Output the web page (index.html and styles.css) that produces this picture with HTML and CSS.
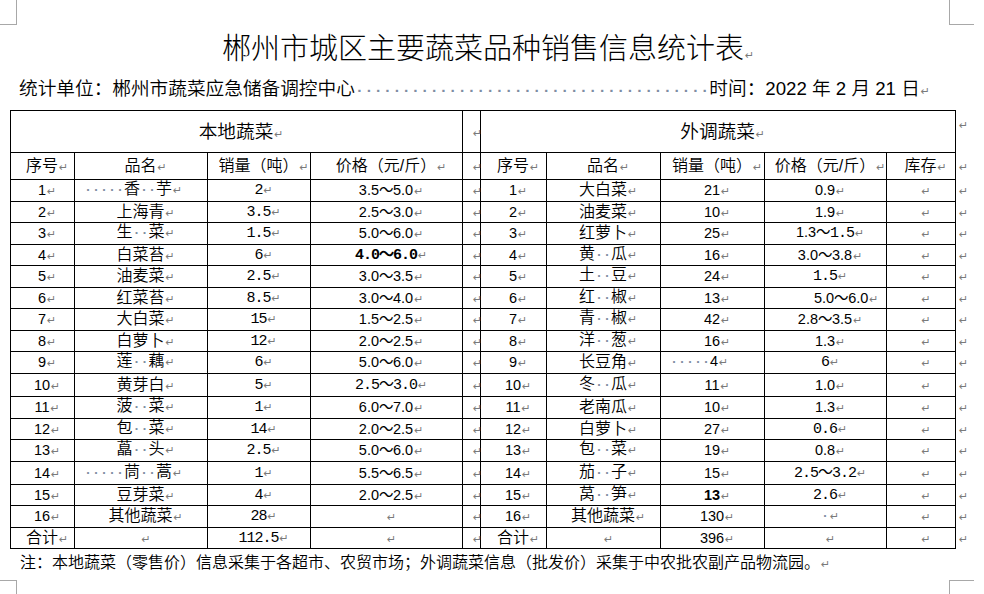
FILE: index.html
```html
<!DOCTYPE html>
<html lang="zh-CN">
<head>
<meta charset="utf-8">
<title>郴州市城区主要蔬菜品种销售信息统计表</title>
<link rel="stylesheet" href="styles.css">
</head>
<body>
<div class="page">
  <span class="crop crop-tl"></span>
  <span class="crop crop-tr"></span>
  <span class="crop crop-bl"></span>
  <span class="crop crop-br"></span>

  <h1 class="title">郴州市城区主要蔬菜品种销售信息统计表<span class="pm">↵</span></h1>
  <p class="meta">统计单位：郴州市蔬菜应急储备调控中心<span class="dots">······································</span>时间：2022 年 2 月 21 日<span class="pm">↵</span></p>

  <table class="sheet">
    <colgroup>
      <col class="w64"><col class="w133"><col class="w103"><col class="w152">
      <col class="w18">
      <col class="w66"><col class="w114"><col class="w104"><col class="w122"><col class="w69">
      <col class="w25">
    </colgroup>
    <tbody>
      <tr class="rh1">
        <td colspan="4" class="hd">本地蔬菜<span class="pm">↵</span></td>
        <td class="mid"><span class="pm">↵</span></td>
        <td colspan="5" class="hd">外调蔬菜<span class="pm">↵</span></td>
        <td class="eor top"><span class="pm">↵</span></td>
      </tr>
      <tr class="rh2">
        <td>序号<span class="pm">↵</span></td>
        <td>品名<span class="pm">↵</span></td>
        <td>销量（吨）<span class="pm">↵</span></td>
        <td>价格（元/斤）<span class="pm">↵</span></td>
        <td class="mid"><span class="pm">↵</span></td>
        <td>序号<span class="pm">↵</span></td>
        <td>品名<span class="pm">↵</span></td>
        <td>销量（吨）<span class="pm">↵</span></td>
        <td>价格（元/斤）<span class="pm">↵</span></td>
        <td>库存<span class="pm">↵</span></td>
        <td class="eor"><span class="pm">↵</span></td>
      </tr>
      <tr>
        <td><span class="c">1</span><span class="pm">↵</span></td>
        <td class="lft"><span class="sp">·····</span>香<span class="sp">··</span>芋<span class="pm">↵</span></td>
        <td><span class="m">2</span><span class="pm">↵</span></td>
        <td><span class="c">3.5～5.0</span><span class="pm">↵</span></td>
        <td class="mid"><span class="pm">↵</span></td>
        <td><span class="c">1</span><span class="pm">↵</span></td>
        <td>大白菜<span class="pm">↵</span></td>
        <td><span class="c">21</span><span class="pm">↵</span></td>
        <td><span class="c">0.9</span><span class="pm">↵</span></td>
        <td><span class="pm">↵</span></td>
        <td class="eor"><span class="pm">↵</span></td>
      </tr>
      <tr>
        <td><span class="c">2</span><span class="pm">↵</span></td>
        <td>上海青<span class="pm">↵</span></td>
        <td><span class="m">3.5</span><span class="pm">↵</span></td>
        <td><span class="c">2.5～3.0</span><span class="pm">↵</span></td>
        <td class="mid"><span class="pm">↵</span></td>
        <td><span class="c">2</span><span class="pm">↵</span></td>
        <td>油麦菜<span class="pm">↵</span></td>
        <td><span class="c">10</span><span class="pm">↵</span></td>
        <td><span class="c">1.9</span><span class="pm">↵</span></td>
        <td><span class="pm">↵</span></td>
        <td class="eor"><span class="pm">↵</span></td>
      </tr>
      <tr>
        <td><span class="c">3</span><span class="pm">↵</span></td>
        <td>生<span class="sp">··</span>菜<span class="pm">↵</span></td>
        <td><span class="m">1.5</span><span class="pm">↵</span></td>
        <td><span class="c">5.0～6.0</span><span class="pm">↵</span></td>
        <td class="mid"><span class="pm">↵</span></td>
        <td><span class="c">3</span><span class="pm">↵</span></td>
        <td>红萝卜<span class="pm">↵</span></td>
        <td><span class="c">25</span><span class="pm">↵</span></td>
        <td><span class="c">1.3～</span><span class="m">1.5</span><span class="pm">↵</span></td>
        <td><span class="pm">↵</span></td>
        <td class="eor"><span class="pm">↵</span></td>
      </tr>
      <tr>
        <td><span class="c">4</span><span class="pm">↵</span></td>
        <td>白菜苔<span class="pm">↵</span></td>
        <td><span class="m">6</span><span class="pm">↵</span></td>
        <td><span class="m b">4.0～6.0</span><span class="pm">↵</span></td>
        <td class="mid"><span class="pm">↵</span></td>
        <td><span class="c">4</span><span class="pm">↵</span></td>
        <td>黄<span class="sp">··</span>瓜<span class="pm">↵</span></td>
        <td><span class="c">16</span><span class="pm">↵</span></td>
        <td><span class="c">3.0～3.8</span><span class="pm">↵</span></td>
        <td><span class="pm">↵</span></td>
        <td class="eor"><span class="pm">↵</span></td>
      </tr>
      <tr>
        <td><span class="c">5</span><span class="pm">↵</span></td>
        <td>油麦菜<span class="pm">↵</span></td>
        <td><span class="m">2.5</span><span class="pm">↵</span></td>
        <td><span class="c">3.0～3.5</span><span class="pm">↵</span></td>
        <td class="mid"><span class="pm">↵</span></td>
        <td><span class="c">5</span><span class="pm">↵</span></td>
        <td>土<span class="sp">··</span>豆<span class="pm">↵</span></td>
        <td><span class="c">24</span><span class="pm">↵</span></td>
        <td><span class="m">1.5</span><span class="pm">↵</span></td>
        <td><span class="pm">↵</span></td>
        <td class="eor"><span class="pm">↵</span></td>
      </tr>
      <tr>
        <td><span class="c">6</span><span class="pm">↵</span></td>
        <td>红菜苔<span class="pm">↵</span></td>
        <td><span class="m">8.5</span><span class="pm">↵</span></td>
        <td><span class="c">3.0～4.0</span><span class="pm">↵</span></td>
        <td class="mid"><span class="pm">↵</span></td>
        <td><span class="c">6</span><span class="pm">↵</span></td>
        <td>红<span class="sp">··</span>椒<span class="pm">↵</span></td>
        <td><span class="c">13</span><span class="pm">↵</span></td>
        <td class="shift"><span class="c">5.0～6.0</span><span class="pm">↵</span></td>
        <td><span class="pm">↵</span></td>
        <td class="eor"><span class="pm">↵</span></td>
      </tr>
      <tr>
        <td><span class="c">7</span><span class="pm">↵</span></td>
        <td>大白菜<span class="pm">↵</span></td>
        <td><span class="m">15</span><span class="pm">↵</span></td>
        <td><span class="c">1.5～2.5</span><span class="pm">↵</span></td>
        <td class="mid"><span class="pm">↵</span></td>
        <td><span class="c">7</span><span class="pm">↵</span></td>
        <td>青<span class="sp">··</span>椒<span class="pm">↵</span></td>
        <td><span class="c">42</span><span class="pm">↵</span></td>
        <td><span class="c">2.8～3.5</span><span class="pm">↵</span></td>
        <td><span class="pm">↵</span></td>
        <td class="eor"><span class="pm">↵</span></td>
      </tr>
      <tr>
        <td><span class="c">8</span><span class="pm">↵</span></td>
        <td>白萝卜<span class="pm">↵</span></td>
        <td><span class="m">12</span><span class="pm">↵</span></td>
        <td><span class="c">2.0～2.5</span><span class="pm">↵</span></td>
        <td class="mid"><span class="pm">↵</span></td>
        <td><span class="c">8</span><span class="pm">↵</span></td>
        <td>洋<span class="sp">··</span>葱<span class="pm">↵</span></td>
        <td><span class="c">16</span><span class="pm">↵</span></td>
        <td><span class="c">1.3</span><span class="pm">↵</span></td>
        <td><span class="pm">↵</span></td>
        <td class="eor"><span class="pm">↵</span></td>
      </tr>
      <tr>
        <td><span class="c">9</span><span class="pm">↵</span></td>
        <td>莲<span class="sp">··</span>藕<span class="pm">↵</span></td>
        <td><span class="m">6</span><span class="pm">↵</span></td>
        <td><span class="c">5.0～6.0</span><span class="pm">↵</span></td>
        <td class="mid"><span class="pm">↵</span></td>
        <td><span class="c">9</span><span class="pm">↵</span></td>
        <td>长豆角<span class="pm">↵</span></td>
        <td class="lft"><span class="sp">·····</span><span class="c">4</span><span class="pm">↵</span></td>
        <td><span class="m">6</span><span class="pm">↵</span></td>
        <td><span class="pm">↵</span></td>
        <td class="eor"><span class="pm">↵</span></td>
      </tr>
      <tr class="rtall">
        <td><span class="c">10</span><span class="pm">↵</span></td>
        <td>黄芽白<span class="pm">↵</span></td>
        <td><span class="m">5</span><span class="pm">↵</span></td>
        <td><span class="m">2.5～3.0</span><span class="pm">↵</span></td>
        <td class="mid"><span class="pm">↵</span></td>
        <td><span class="c">10</span><span class="pm">↵</span></td>
        <td>冬<span class="sp">··</span>瓜<span class="pm">↵</span></td>
        <td><span class="c">11</span><span class="pm">↵</span></td>
        <td><span class="c">1.0</span><span class="pm">↵</span></td>
        <td><span class="pm">↵</span></td>
        <td class="eor"><span class="pm">↵</span></td>
      </tr>
      <tr>
        <td><span class="c">11</span><span class="pm">↵</span></td>
        <td>菠<span class="sp">··</span>菜<span class="pm">↵</span></td>
        <td><span class="m">1</span><span class="pm">↵</span></td>
        <td><span class="c">6.0～7.0</span><span class="pm">↵</span></td>
        <td class="mid"><span class="pm">↵</span></td>
        <td><span class="c">11</span><span class="pm">↵</span></td>
        <td>老南瓜<span class="pm">↵</span></td>
        <td><span class="c">10</span><span class="pm">↵</span></td>
        <td><span class="c">1.3</span><span class="pm">↵</span></td>
        <td><span class="pm">↵</span></td>
        <td class="eor"><span class="pm">↵</span></td>
      </tr>
      <tr>
        <td><span class="c">12</span><span class="pm">↵</span></td>
        <td>包<span class="sp">··</span>菜<span class="pm">↵</span></td>
        <td><span class="m">14</span><span class="pm">↵</span></td>
        <td><span class="c">2.0～2.5</span><span class="pm">↵</span></td>
        <td class="mid"><span class="pm">↵</span></td>
        <td><span class="c">12</span><span class="pm">↵</span></td>
        <td>白萝卜<span class="pm">↵</span></td>
        <td><span class="c">27</span><span class="pm">↵</span></td>
        <td><span class="m">0.6</span><span class="pm">↵</span></td>
        <td><span class="pm">↵</span></td>
        <td class="eor"><span class="pm">↵</span></td>
      </tr>
      <tr>
        <td><span class="c">13</span><span class="pm">↵</span></td>
        <td>藠<span class="sp">··</span>头<span class="pm">↵</span></td>
        <td><span class="m">2.5</span><span class="pm">↵</span></td>
        <td><span class="c">5.0～6.0</span><span class="pm">↵</span></td>
        <td class="mid"><span class="pm">↵</span></td>
        <td><span class="c">13</span><span class="pm">↵</span></td>
        <td>包<span class="sp">··</span>菜<span class="pm">↵</span></td>
        <td><span class="c">19</span><span class="pm">↵</span></td>
        <td><span class="c">0.8</span><span class="pm">↵</span></td>
        <td><span class="pm">↵</span></td>
        <td class="eor"><span class="pm">↵</span></td>
      </tr>
      <tr class="rmid">
        <td><span class="c">14</span><span class="pm">↵</span></td>
        <td class="lft"><span class="sp">·····</span>茼<span class="sp">··</span>蒿<span class="pm">↵</span></td>
        <td><span class="m">1</span><span class="pm">↵</span></td>
        <td><span class="c">5.5～6.5</span><span class="pm">↵</span></td>
        <td class="mid"><span class="pm">↵</span></td>
        <td><span class="c">14</span><span class="pm">↵</span></td>
        <td>茄<span class="sp">··</span>子<span class="pm">↵</span></td>
        <td><span class="c">15</span><span class="pm">↵</span></td>
        <td><span class="m">2.5～3.2</span><span class="pm">↵</span></td>
        <td><span class="pm">↵</span></td>
        <td class="eor"><span class="pm">↵</span></td>
      </tr>
      <tr>
        <td><span class="c">15</span><span class="pm">↵</span></td>
        <td>豆芽菜<span class="pm">↵</span></td>
        <td><span class="m">4</span><span class="pm">↵</span></td>
        <td><span class="c">2.0～2.5</span><span class="pm">↵</span></td>
        <td class="mid"><span class="pm">↵</span></td>
        <td><span class="c">15</span><span class="pm">↵</span></td>
        <td>莴<span class="sp">··</span>笋<span class="pm">↵</span></td>
        <td><span class="c b">13</span><span class="pm">↵</span></td>
        <td><span class="m">2.6</span><span class="pm">↵</span></td>
        <td><span class="pm">↵</span></td>
        <td class="eor"><span class="pm">↵</span></td>
      </tr>
      <tr>
        <td><span class="c">16</span><span class="pm">↵</span></td>
        <td>其他蔬菜<span class="pm">↵</span></td>
        <td><span class="m">28</span><span class="pm">↵</span></td>
        <td><span class="pm">↵</span></td>
        <td class="mid"><span class="pm">↵</span></td>
        <td><span class="c">16</span><span class="pm">↵</span></td>
        <td>其他蔬菜<span class="pm">↵</span></td>
        <td><span class="c">130</span><span class="pm">↵</span></td>
        <td><span class="sp">·</span><span class="pm">↵</span></td>
        <td><span class="pm">↵</span></td>
        <td class="eor"><span class="pm">↵</span></td>
      </tr>
      <tr>
        <td>合计<span class="pm">↵</span></td>
        <td><span class="pm">↵</span></td>
        <td><span class="m">112.5</span><span class="pm">↵</span></td>
        <td><span class="pm">↵</span></td>
        <td class="mid"><span class="pm">↵</span></td>
        <td>合计<span class="pm">↵</span></td>
        <td><span class="pm">↵</span></td>
        <td><span class="c">396</span><span class="pm">↵</span></td>
        <td><span class="pm">↵</span></td>
        <td><span class="pm">↵</span></td>
        <td class="eor"><span class="pm">↵</span></td>
      </tr>
    </tbody>
  </table>

  <p class="note">注：本地蔬菜（零售价）信息采集于各超市、农贸市场；外调蔬菜信息（批发价）采集于中农批农副产品物流园。<span class="pm">↵</span></p>
</div>
</body>
</html>
```

FILE: styles.css
```css
html, body {
  margin: 0;
  padding: 0;
  background: #ffffff;
}

body {
  font-family: "Liberation Sans", "Noto Sans CJK SC", sans-serif;
  font-weight: 350;
  color: #000000;
  width: 984px;
  height: 594px;
  overflow: hidden;
}

.page {
  position: relative;
  width: 984px;
  height: 594px;
}

/* page corner guides */
.crop {
  position: absolute;
  border: 0 solid #a8a8a8;
}
.crop-tl { left: 0; top: 0; width: 16px; height: 24px; border-right-width: 1px; border-bottom-width: 1px; }
.crop-tr { left: 949px; top: 0; width: 24px; height: 24px; border-left-width: 1px; border-bottom-width: 1px; }
.crop-bl { left: 0; top: 580px; width: 16px; height: 20px; border-right-width: 1px; border-top-width: 1px; }
.crop-br { left: 949px; top: 580px; width: 24px; height: 20px; border-left-width: 1px; border-top-width: 1px; }

/* paragraph mark */
.pm {
  display: inline-block;
  width: 0;
  padding-left: 1px;
  font-family: "DejaVu Sans", sans-serif;
  font-size: 11px;
  font-weight: normal;
  letter-spacing: 0;
  line-height: 1;
  color: #7a7a7a;
  white-space: nowrap;
}

/* space marks */
.sp {
  font-family: "Liberation Mono", monospace;
  font-size: 13.33px;
  font-weight: bold;
  color: #7f8da3;
}

.title {
  margin: 0;
  padding: 32px 0 0 222px;
  font-family: "Noto Sans CJK SC", sans-serif;
  font-weight: 300;
  font-size: 29px;
  line-height: 29px;
  white-space: nowrap;
}

.meta {
  margin: 18px 0 0 19px;
  font-size: 18.67px;
  line-height: 20px;
  white-space: nowrap;
}

.dots {
  font-family: "Liberation Mono", monospace;
  font-size: 15.56px;
  font-weight: bold;
  color: #7f8da3;
}

.sheet {
  margin: 9px 0 0 10px;
  border-collapse: collapse;
  table-layout: fixed;
  width: 970px;
  font-size: 16px;
}

.w64 { width: 64px; }
.w133 { width: 133px; }
.w103 { width: 103px; }
.w152 { width: 152px; }
.w18 { width: 18px; }
.w66 { width: 66px; }
.w114 { width: 114px; }
.w104 { width: 104px; }
.w122 { width: 122px; }
.w69 { width: 69px; }
.w25 { width: 25px; }

.sheet tr { height: 21.5px; }
.sheet tr.rh1 { height: 42px; }
.sheet tr.rh2 { height: 27px; }
.sheet tr.rtall { height: 23.7px; }
.sheet tr.rmid { height: 23px; }

.sheet td {
  border: 1px solid #000000;
  padding: 0;
  text-align: center;
  vertical-align: middle;
  white-space: nowrap;
  line-height: 18px;
}

.sheet td.hd { font-size: 18.67px; }

.sheet td.mid {
  text-align: left;
  padding-left: 9px;
}

.sheet td.eor {
  border: none;
  text-align: left;
  padding-left: 2px;
}
.sheet td.eor.top {
  vertical-align: top;
  padding-top: 4px;
}

.sheet td.lft {
  text-align: left;
  padding-left: 9px;
}

.sheet td.shift {
  text-align: left;
  padding-left: 49px;
}

/* Calibri-like digits */
.c {
  font-family: "Liberation Sans", sans-serif;
  font-weight: normal;
  font-size: 14.5px;
}

/* SimSun-like half-width digits */
.m {
  font-family: "Liberation Mono", monospace;
  font-weight: normal;
  font-size: 15px;
  letter-spacing: -1px;
}

.b { font-weight: bold; }

.note {
  margin: 5px 0 0 20px;
  font-size: 16px;
  line-height: 18px;
  white-space: nowrap;
}
```
